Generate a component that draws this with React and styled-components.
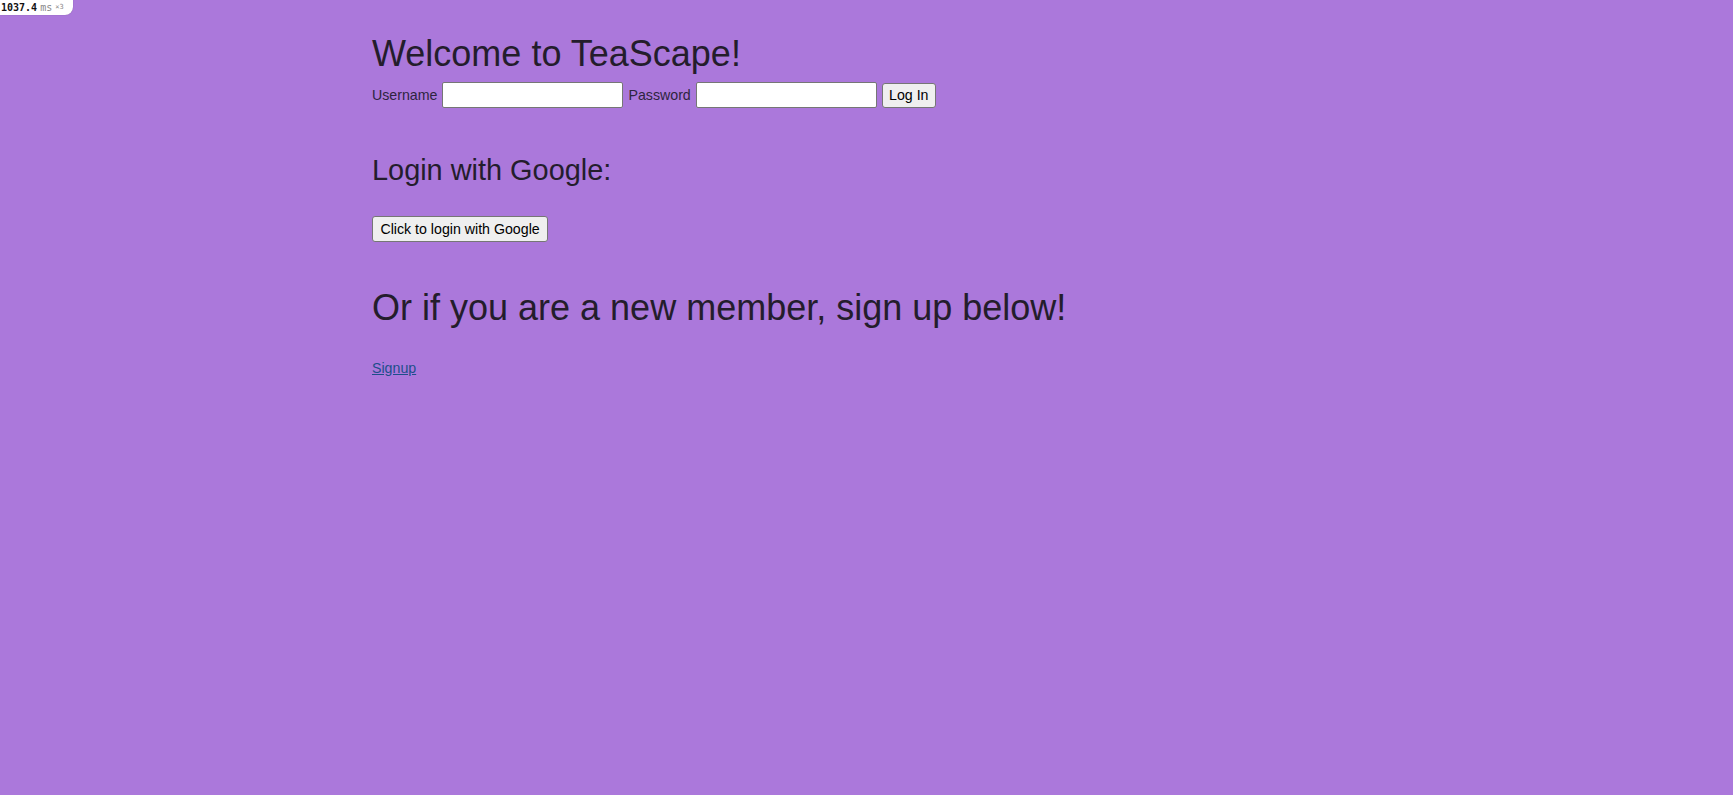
import React from "react";
import styled, { createGlobalStyle } from "styled-components";

const GlobalStyle = createGlobalStyle`
  html, body {
    margin: 0;
    padding: 0;
    background: #ab78db;
    min-height: 100%;
  }
  body {
    font-family: "Liberation Sans", Arial, sans-serif;
    color: #231c2b;
  }
`;

const Page = styled.div`
  position: relative;
  min-height: 795px;
  background: #ab78db;
`;

const PerfBadge = styled.div`
  position: absolute;
  top: 0;
  left: 0;
  height: 15px;
  padding: 0 9px 0 1px;
  display: flex;
  align-items: center;
  gap: 3px;
  background: #ffffff;
  border-bottom-right-radius: 8px;
  box-shadow: 0 0 1px rgba(0, 0, 0, 0.35);
  font-family: "DejaVu Sans Mono", "Liberation Mono", monospace;
  font-size: 10px;
  line-height: 15px;
`;

const PerfValue = styled.span`
  color: #111;
  font-weight: bold;
`;

const PerfUnit = styled.span`
  color: #888;
  font-size: ${(p) => (p.$small ? "7px" : "10px")};
`;

const Container = styled.main`
  width: 989px;
  margin: 0 auto;
  padding-top: 34px;
  display: flex;
  flex-direction: column;
  align-items: flex-start;
`;

const Title = styled.h1`
  margin: ${(p) => p.$top || 0}px 0 0;
  font-size: 36px;
  font-weight: normal;
  line-height: 40.4px;
  color: #241d2c;
`;

const SubTitle = styled.h2`
  margin: ${(p) => p.$top || 0}px 0 0;
  font-size: 28.9px;
  font-weight: normal;
  line-height: 33px;
  color: #241d2c;
`;

const LoginForm = styled.form`
  margin-top: 8px;
  display: flex;
  align-items: center;
  height: 26px;
  gap: 5px;
`;

const Label = styled.label`
  font-size: 14.2px;
  line-height: 16px;
  color: #2e2440;
`;

const TextInput = styled.input`
  box-sizing: border-box;
  width: 181px;
  height: 26px;
  margin: 0;
  padding: 1px 3px;
  border: 1px solid #767676;
  border-radius: 2px;
  background: #ffffff;
  font-family: "Liberation Sans", Arial, sans-serif;
  font-size: 14.2px;
`;

const Button = styled.button`
  box-sizing: border-box;
  height: ${(p) => p.$h || 25}px;
  margin: ${(p) => p.$top || 0}px 0 0;
  padding: 0 ${(p) => p.$px || 6.3}px;
  border: 1px solid #767676;
  border-radius: 3px;
  background: #efefef;
  color: #000;
  font-family: "Liberation Sans", Arial, sans-serif;
  font-size: 14.2px;
  line-height: 16px;
  cursor: pointer;
`;

const SignupLink = styled.a`
  margin-top: 31.6px;
  font-size: 14.2px;
  line-height: 16.3px;
  color: #1d4e8a;
  text-decoration: underline;
`;

export default function App() {
  return (
    <Page>
      <GlobalStyle />
      <PerfBadge>
        <PerfValue>1037.4</PerfValue>
        <PerfUnit>ms</PerfUnit>
        <PerfUnit $small>×3</PerfUnit>
      </PerfBadge>
      <Container>
        <Title>Welcome to TeaScape!</Title>
        <LoginForm onSubmit={(e) => e.preventDefault()}>
          <Label htmlFor="username">Username</Label>
          <TextInput id="username" type="text" />
          <Label htmlFor="password">Password</Label>
          <TextInput id="password" type="password" />
          <Button type="submit">Log In</Button>
        </LoginForm>
        <SubTitle $top={45.7}>Login with Google:</SubTitle>
        <Button $top={29.4} $h={26} $px={7.4}>Click to login with Google</Button>
        <Title $top={45.6}>Or if you are a new member, sign up below!</Title>
        <SignupLink href="#signup">Signup</SignupLink>
      </Container>
    </Page>
  );
}
